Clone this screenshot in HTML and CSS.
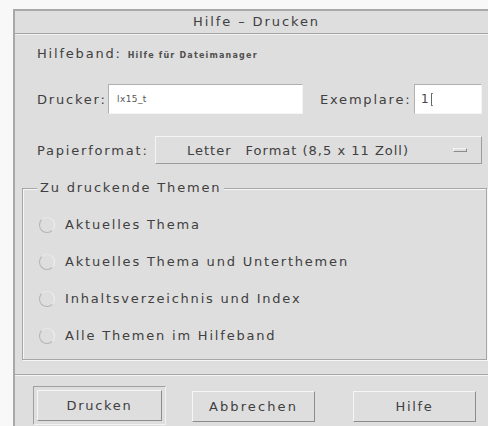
FILE: index.html
```html
<!DOCTYPE html>
<html lang="de">
<head>
<meta charset="utf-8">
<title>Hilfe – Drucken</title>
<link rel="stylesheet" href="styles.css">
</head>
<body>
<div class="window">
  <div class="titlebar">Hilfe – Drucken</div>
  <div class="content">
    <div class="row row-band">
      <span class="label">Hilfeband:</span>
      <span class="band-name">Hilfe für Dateimanager</span>
    </div>
    <div class="row row-printer">
      <span class="label label-printer">Drucker:</span>
      <div class="field field-printer"><span class="field-text">lx15_t</span></div>
      <span class="label label-copies">Exemplare:</span>
      <div class="field field-copies"><span class="copies-text">1</span><span class="cursor"></span></div>
    </div>
    <div class="row row-paper">
      <span class="label label-paper">Papierformat:</span>
      <div class="option-menu">
        <span class="option-text"><span class="word-gap">Letter</span>Format (8,5 x 11 Zoll)</span>
        <span class="option-indicator"></span>
      </div>
    </div>
    <fieldset class="group">
      <legend class="group-title">Zu druckende Themen</legend>
      <div class="radio-list">
        <div class="radio-row"><span class="radio"></span><span class="radio-label">Aktuelles Thema</span></div>
        <div class="radio-row"><span class="radio"></span><span class="radio-label">Aktuelles Thema und Unterthemen</span></div>
        <div class="radio-row"><span class="radio"></span><span class="radio-label">Inhaltsverzeichnis und Index</span></div>
        <div class="radio-row"><span class="radio"></span><span class="radio-label">Alle Themen im Hilfeband</span></div>
      </div>
    </fieldset>
  </div>
  <div class="separator"></div>
  <div class="actions">
    <div class="default-frame"><button class="btn btn-print">Drucken</button></div>
    <button class="btn btn-cancel">Abbrechen</button>
    <button class="btn btn-help">Hilfe</button>
  </div>
</div>
</body>
</html>
```
FILE: styles.css
```css
html, body {
  margin: 0;
  padding: 0;
}

body {
  background: #f8f8f8;
  overflow: hidden;
  width: 488px;
  height: 426px;
  font-family: "DejaVu Sans", "Liberation Sans", sans-serif;
  font-size: 13px;
  letter-spacing: 1.8px;
  color: #404040;
}

.window {
  margin: 9px 0 0 13px;
  width: 485px;
  height: 430px;
  box-sizing: border-box;
  background: #dedede;
  border-top: 2px solid #a8a8a8;
  border-left: 2px solid #a8a8a8;
}

.titlebar {
  height: 22px;
  line-height: 22px;
  text-align: center;
  letter-spacing: 1.9px;
  border-bottom: 1px solid #a4a4a4;
  box-shadow: 0 1px 0 #f2f2f2;
}

.content {
  display: flex;
  flex-direction: column;
}

.row {
  display: flex;
  align-items: center;
  margin-left: 22px;
}

.row-band {
  margin-top: 12px;
  height: 20px;
  align-items: baseline;
}

.band-name {
  margin-left: 6px;
  font-size: 8px;
  font-weight: bold;
  letter-spacing: 1.2px;
  color: #505050;
}

.row-printer {
  margin-top: 18px;
  height: 30px;
}

.label-printer {
  width: 71px;
}

.field {
  height: 30px;
  box-sizing: border-box;
  background: #ffffff;
  border: 1px solid;
  border-color: #b0b0b0 #f4f4f4 #f4f4f4 #b0b0b0;
  display: flex;
  align-items: center;
}

.field-printer {
  width: 195px;
  padding-left: 8px;
}

.field-text {
  font-size: 9px;
  letter-spacing: 0.4px;
  color: #555;
}

.label-copies {
  margin-left: 17px;
  width: 94px;
}

.field-copies {
  width: 68px;
  padding-left: 6px;
}

.copies-text {
  font-size: 12px;
  letter-spacing: 0;
  color: #444;
}

.cursor {
  width: 2px;
  height: 13px;
  margin-left: 2px;
  border-left: 1px solid #666;
  border-top: 1px solid #888;
  border-bottom: 1px solid #888;
  box-sizing: border-box;
}

.row-paper {
  margin-top: 22px;
  height: 28px;
}

.label-paper {
  width: 118px;
}

.option-menu {
  width: 327px;
  height: 28px;
  box-sizing: border-box;
  border: 1px solid;
  border-color: #f4f4f4 #9c9c9c #9c9c9c #f4f4f4;
  display: flex;
  align-items: center;
  padding-left: 31px;
}

.option-text {
  flex: 1;
  letter-spacing: 1px;
}

.word-gap {
  margin-right: 14px;
}

.option-indicator {
  width: 14px;
  height: 4px;
  box-sizing: border-box;
  margin-right: 14px;
  border: 1px solid;
  border-color: #f4f4f4 #8c8c8c #8c8c8c #f4f4f4;
}

.group {
  margin: 16px 0 0 7px;
  width: 465px;
  box-sizing: border-box;
  padding: 0 0 5px 0;
  border: 1px solid #a6a6a6;
  box-shadow: inset 1px 1px 0 #f6f6f6, 1px 1px 0 #f6f6f6;
}

.group-title {
  margin-left: 14px;
  padding: 0 3px;
  line-height: 16px;
  background: #dedede;
}

.radio-list {
  display: flex;
  flex-direction: column;
  padding-top: 10px;
}

.radio-row {
  height: 37px;
  display: flex;
  align-items: center;
  padding-left: 16px;
}

.radio {
  width: 16px;
  height: 16px;
  box-sizing: border-box;
  border-radius: 50%;
  border: 1px solid;
  border-color: #e8e8e8 #efefef #b4b4b4 #b4b4b4;
  margin-right: 10px;
}

.separator {
  margin-top: 14px;
  height: 1px;
  background: #a6a6a6;
  box-shadow: 0 1px 0 #f4f4f4;
}

.actions {
  display: flex;
  align-items: flex-start;
  margin-top: 11px;
  padding-left: 18px;
}

.default-frame {
  border: 1px solid;
  border-color: #a0a0a0 #f2f2f2 #f2f2f2 #a0a0a0;
  padding: 3px;
}

.btn {
  font-family: inherit;
  font-size: 13px;
  letter-spacing: 1.7px;
  color: #404040;
  background: #dedede;
  height: 31px;
  margin: 0;
  padding: 0;
  box-sizing: border-box;
  border: 1px solid;
  border-color: #f6f6f6 #8c8c8c #8c8c8c #f6f6f6;
}

.btn-print {
  width: 125px;
  display: block;
}

.btn-cancel {
  width: 123px;
  margin: 5px 0 0 26px;
  letter-spacing: 2.1px;
}

.btn-help {
  width: 123px;
  margin: 5px 0 0 38px;
}
```
